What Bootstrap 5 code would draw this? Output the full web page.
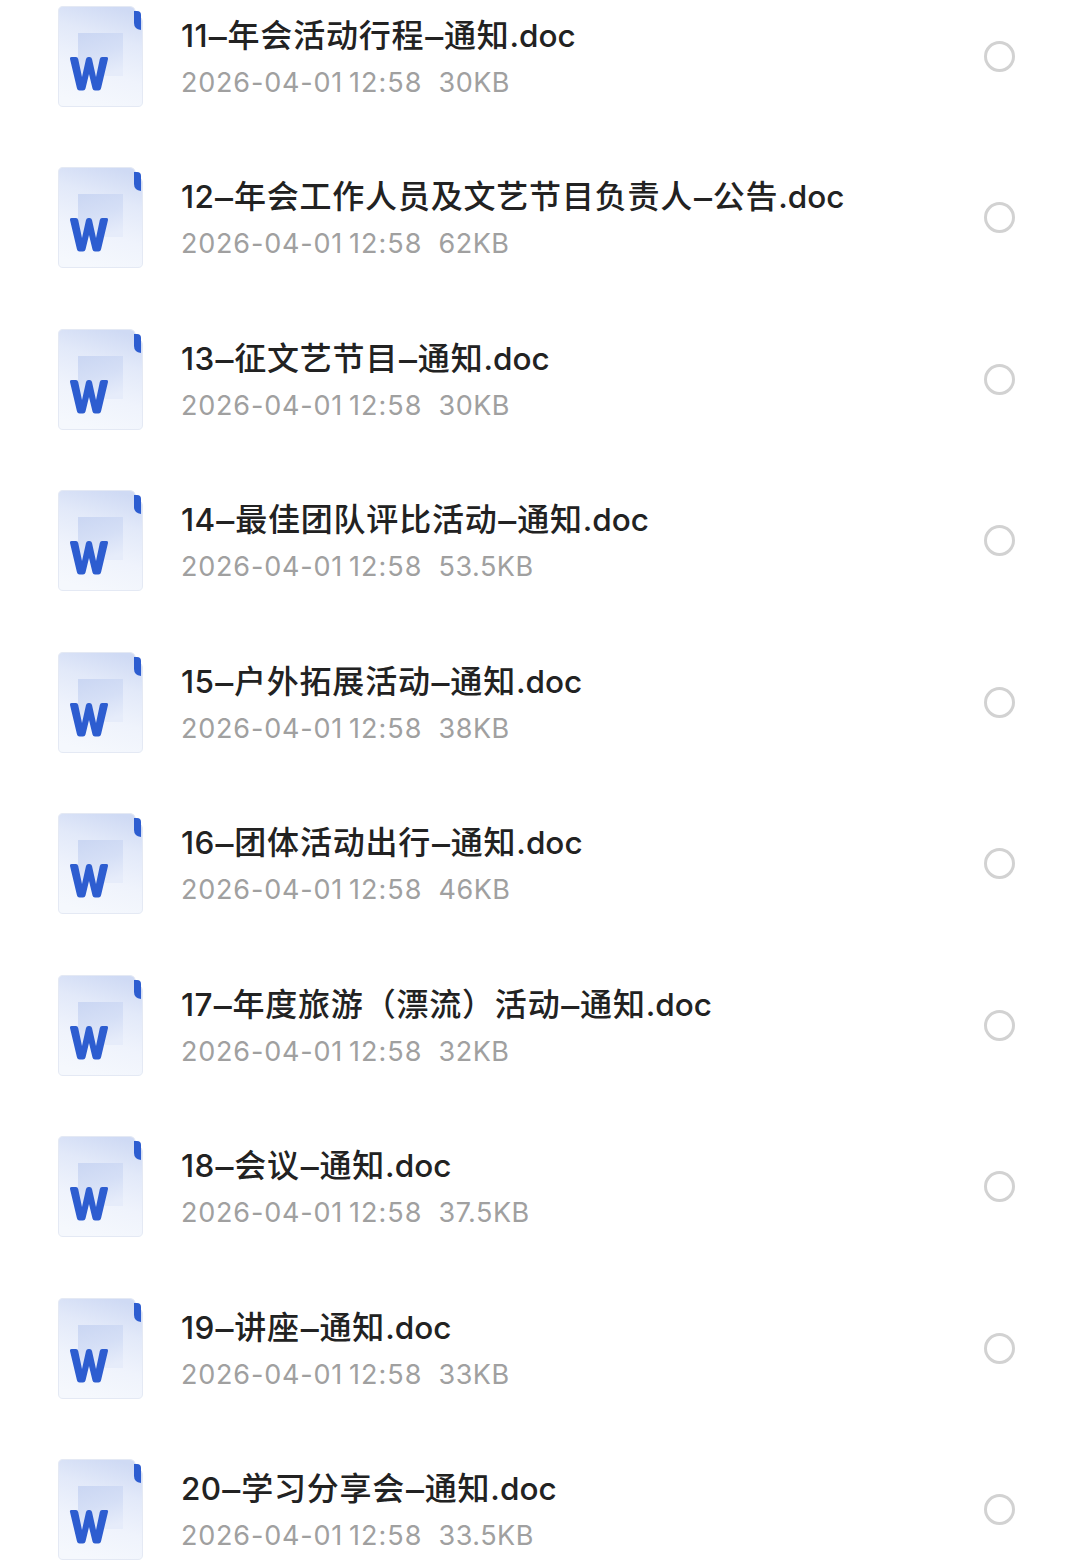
<!DOCTYPE html>
<html lang="zh-CN">
<head>
  <meta charset="UTF-8" />
  <meta name="viewport" content="width=device-width, initial-scale=1.0"/>
  <title>文件列表</title>
  <link href="https://cdn.jsdelivr.net/npm/bootstrap@5.3.3/dist/css/bootstrap.min.css" rel="stylesheet"/>
  <style>
    body {
      background: #fff;
      font-family: Inter, "Noto Sans CJK SC", sans-serif;
    }
    #fileList {
      padding: 6px 65px 0 58px;
      gap: 60.48px;
    }
    .file-row {
      height: 101px;
    }
    .file-icon {
      width: 85px;
      height: 101px;
      margin-right: 38px;
    }
    .file-name {
      height: 47px;
      line-height: 47px;
      margin-top: 5.800px;
      font-size: 32px;
      font-weight: 500;
      letter-spacing: .8px;
      color: #222;
    }
    .latin {
      font-size: 31.5px;
      letter-spacing: .4px;
    }
    .ext {
      font-size: 31.5px;
      letter-spacing: 0;
    }
    .dash {
      display: inline-block;
      height: 30px;
      line-height: 30px;
      font-size: 36px;
      font-weight: 400;
      letter-spacing: 0;
      padding: 0 .8px;
      vertical-align: -3px;
    }
    .file-meta {
      height: 40px;
      line-height: 40px;
      margin-top: 4.200px;
      font-size: 27px;
      letter-spacing: .5px;
      color: #a0a0a0;
    }
    .file-date { width: 168px; letter-spacing: .8px; }
    .file-time { width: 89.5px; letter-spacing: 1px; }
    .pick {
      width: 31px;
      height: 31px;
      border: 3px solid #d2d2d2;
    }
  </style>
</head>
<body>
  <!-- Gradasi untuk ikon dokumen -->
  <svg class="position-absolute" width="0" height="0">
    <defs>
      <linearGradient id="paper" x1="0.65" y1="0" x2="0.4" y2="1">
        <stop offset="0" stop-color="#cfdaf4"/>
        <stop offset="0.3" stop-color="#e2e9f9"/>
        <stop offset="0.65" stop-color="#eff3fc"/>
        <stop offset="1" stop-color="#f5f8fd"/>
      </linearGradient>
      <linearGradient id="sheet" x1="0.2" y1="0" x2="0.5" y2="1">
        <stop offset="0" stop-color="#cbd7f3"/>
        <stop offset="0.5" stop-color="#d5dff6"/>
        <stop offset="1" stop-color="#e6ecfa"/>
      </linearGradient>
    </defs>
  </svg>

  <div class="d-flex flex-column" id="fileList"></div>

  <script src="https://cdn.jsdelivr.net/npm/bootstrap@5.3.3/dist/js/bootstrap.bundle.min.js"></script>
  <script>
    const files = [
      { nama: '11–年会活动行程–通知.doc', ukuran: '30KB' },
      { nama: '12–年会工作人员及文艺节目负责人–公告.doc', ukuran: '62KB' },
      { nama: '13–征文艺节目–通知.doc', ukuran: '30KB' },
      { nama: '14–最佳团队评比活动–通知.doc', ukuran: '53.5KB' },
      { nama: '15–户外拓展活动–通知.doc', ukuran: '38KB' },
      { nama: '16–团体活动出行–通知.doc', ukuran: '46KB' },
      { nama: '17–年度旅游（漂流）活动–通知.doc', ukuran: '32KB' },
      { nama: '18–会议–通知.doc', ukuran: '37.5KB' },
      { nama: '19–讲座–通知.doc', ukuran: '33KB' },
      { nama: '20–学习分享会–通知.doc', ukuran: '33.5KB' }
    ];

    const icon = `
      <svg class="file-icon flex-shrink-0" viewBox="0 0 85 101">
        <path d="M5 .5H72Q76 .5 77 4Q78 8 81 10Q84.500 12 84.500 16V96Q84.500 100.500 80 100.500H5Q.5 100.500 .5 96V5Q.5 .5 5 .5Z" fill="url(#paper)" stroke="#e4e9f4" stroke-width="1"/>
        <path d="M20 27H65V70H20Z" fill="url(#sheet)"/>
        <path d="M76 5H79Q83 5 83 9V24Q76 23 76 17Z" fill="#2d5dd0"/>
        <path d="M13.500 51H18Q19.800 51 20.200 53L24 71L28 53Q28.500 51 30.500 51H31.500Q33.500 51 34 53L38 71L41.800 53Q42.300 51 44 51H48.500Q50.500 51 50 53L43 82.500Q42.500 84.500 40.500 84.500H37Q35 84.500 34.500 82.500L31 68L27.500 82.500Q27 84.500 25 84.500H21.500Q19.500 84.500 19 82.500L12 53Q11.500 51 13.500 51Z" fill="#2d5dd0"/>
      </svg>`;

    function formatNama(nama) {
      return nama
        .replace('.doc', '<span class="ext">.doc</span>')
        .replace(/^\d+/, '<span class="latin">$&</span>')
        .replace(/–/g, '<span class="dash">–</span>');
    }

    document.getElementById('fileList').innerHTML = files.map(file => `
      <div class="file-row d-flex align-items-center">
        ${icon}
        <div class="flex-grow-1 align-self-start text-nowrap">
          <div class="file-name">${formatNama(file.nama)}</div>
          <div class="file-meta d-flex">
            <span class="file-date">2026-04-01</span>
            <span class="file-time">12:58</span>
            <span>${file.ukuran}</span>
          </div>
        </div>
        <span class="pick rounded-circle flex-shrink-0"></span>
      </div>
    `).join('');
  </script>
</body>
</html>
